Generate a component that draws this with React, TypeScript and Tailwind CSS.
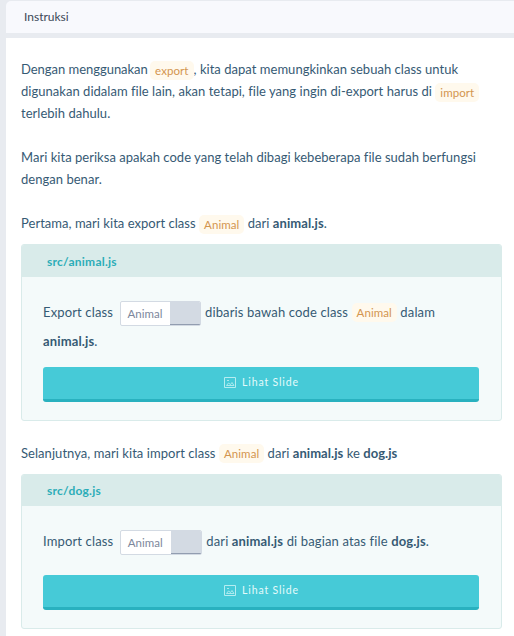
import type { ReactNode } from 'react';

function Code({ children, shift = 'top-0' }: { children: ReactNode; shift?: string }) {
  return (
    <code className={`relative ${shift} inline-block h-[19px] rounded-[5px] bg-[#fff9ed] px-[5px] align-middle font-['Lato',sans-serif] text-[11.5px] leading-[19px] tracking-[0.08px] text-[#d3954f]`}>
      {children}
    </code>
  );
}

function Blank({ width }: { width: string }) {
  return (
    <span className={`mr-px ml-[3px] inline-flex h-[25px] overflow-hidden rounded-[2px] border border-[#d3dae3] bg-white align-middle tracking-normal ${width}`}>
      <span className="flex-1 pl-[7px] text-[11.5px] leading-[23px] text-[#7d879c]">Animal</span>
      <span className="-mr-px -mb-px w-[31px] border-b-2 border-[#929db0] bg-[#d3dae3]" />
    </span>
  );
}

function SlideButton() {
  return (
    <button className="flex h-[35px] w-[436px] items-center justify-center rounded-[3px] border-b-[3px] border-[#29b1bf] bg-[#46cad7] pb-px text-[10.5px] tracking-[0.85px] text-[#e4fafb]">
      <svg className="mr-[6px] ml-px" width="12" height="11" viewBox="0 0 12 11" fill="none" stroke="#b5edf1">
        <path d="M.5 .5h11v10H.5z" />
        <path d="M2.5 8.5h7.5L8 5.5 6.5 7.5 4.5 6 2.5 8.5M3 3.5h2" strokeWidth=".9" />
      </svg>
      Lihat Slide
    </button>
  );
}

function Card({ title, head, body, className, children }: { title: string; head: string; body: string; className: string; children: ReactNode }) {
  return (
    <section className={`w-[481px] overflow-hidden rounded-[3px] border border-[#d9ebea] bg-[#f4fafa] ${className}`}>
      <h2 className={`bg-[#d9ebea] pl-[25px] text-[12px] font-bold tracking-[0.25px] text-[#2cadb8] ${head}`}>{title}</h2>
      <div className="px-[21px]">
        <p className={`whitespace-nowrap leading-[29px] tracking-[0.14px] ${body}`}>{children}</p>
        <SlideButton />
      </div>
    </section>
  );
}

export default function App() {
  return (
    <div className="h-[636px] w-[514px] overflow-hidden bg-[#e8ebf0] pl-[6px] pt-px font-['Lato',sans-serif] text-[13px] text-[#365a74] [font-variant-ligatures:none]">
      <header className="h-8 rounded-tl-[5px] bg-[#f8f9fd] pl-[18px] text-[12px] leading-[32px] text-[#3c4858]">Instruksi</header>
      <main className="mt-[5px] h-[598px] bg-white pl-[15px] pt-[20px]">
        <div className="whitespace-nowrap leading-[22px] tracking-[0.03px]">
          <p className="h-[22px]"><span className="-mr-px tracking-[-0.03px]">Dengan menggunakan </span><Code>export</Code>, kita dapat memungkinkan sebuah class untuk</p>
          <p className="h-[22px]">digunakan didalam file lain, akan tetapi, file yang ingin di-export harus di <Code>import</Code></p>
          <p className="h-[22px]">terlebih dahulu.</p>
          <p className="mt-[22px] h-[22px]">Mari kita periksa apakah code yang telah dibagi kebeberapa file sudah berfungsi</p>
          <p className="h-[22px]">dengan benar.</p>
          <p className="mt-[22px] h-[22px]">Pertama, mari kita export class <Code>Animal</Code> dari <b className="tracking-[0.1px]">animal.js</b>.</p>
        </div>
        <Card title="src/animal.js" head="h-8 leading-[33px]" body="h-[90px] pt-[21px]" className="mt-[10px] h-[177px]">
          Export class <Blank width="w-[81px]" /> dibaris bawah code class <Code shift="-top-px">Animal</Code> dalam<br /><b>animal.js</b>.
        </Card>
        <p className="mt-[21px] h-[22px] whitespace-nowrap leading-[22px] tracking-[0.05px]">Selanjutnya, mari kita import class <Code shift="-top-px">Animal</Code> dari <b>animal.js</b> ke <b>dog.js</b></p>
        <Card title="src/dog.js" head="h-[31px] leading-[32px]" body="h-[69px] pt-[21px]" className="mt-[10px] h-[155px]">
          Import class <Blank width="w-[82px]" /> dari <b>animal.js</b> di bagian atas file <b>dog.js</b>.
        </Card>
      </main>
    </div>
  );
}
